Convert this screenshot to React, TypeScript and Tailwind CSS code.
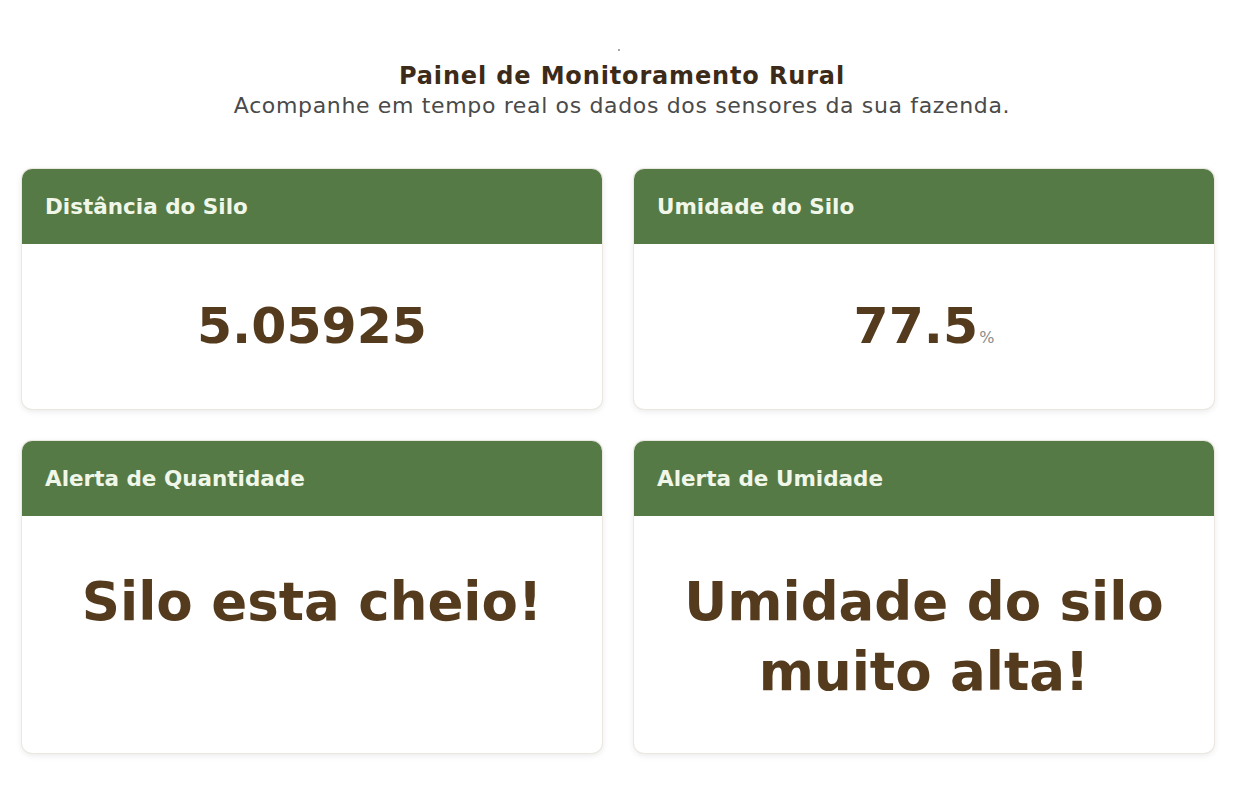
import React from "react";

const font = { fontFamily: '"DejaVu Sans", "Noto Sans", Arial, sans-serif' };

function Card({ title, children, bodyClass }: { title: string; children: React.ReactNode; bodyClass: string }) {
  return (
    <div className="flex flex-col overflow-hidden rounded-[10px] bg-white shadow-[0_0_0_1px_#ebe7e1,0_2px_7px_rgba(0,0,0,0.10)]">
      <div className="flex h-[75px] items-center bg-[#567a45] px-[23px]">
        <h2 className="text-[21.5px] font-bold leading-none text-[#f0f7e9]">{title}</h2>
      </div>
      <div className={bodyClass}>{children}</div>
    </div>
  );
}

export default function App() {
  return (
    <div className="min-h-[790px] w-full bg-white" style={font}>
      <div className="flex flex-col items-center pt-[49px]">
        <div className="ml-[-6px] h-[2px] w-[2px] rounded-full bg-[#8a8a8a]" />
        <h1 className="mt-[10px] text-[24px] font-bold leading-[30px] tracking-[0.85px] text-[#3d2b1a]">Painel de Monitoramento Rural</h1>
        <p className="text-[22px] leading-[29px] tracking-[0.65px] text-[#4a4a4a]">Acompanhe em tempo real os dados dos sensores da sua fazenda.</p>
      </div>
      <div className="grid grid-cols-2 gap-x-[32px] gap-y-[32px] pl-[22px] pr-[30px] pt-[49px]">
        <Card title="Distância do Silo" bodyClass="flex h-[165px] items-center justify-center">
          <span className="text-[50.5px] font-bold leading-none text-[#553b1d]">5.05925</span>
        </Card>
        <Card title="Umidade do Silo" bodyClass="flex h-[165px] items-center justify-center">
          <span className="text-[50.5px] font-bold leading-none text-[#553b1d]">
            77.5<span className="ml-[1px] text-[16px] font-normal text-[#8c8c8c]">%</span>
          </span>
        </Card>
        <Card title="Alerta de Quantidade" bodyClass="flex h-[237px] justify-center px-[20px] pt-[51px] text-center">
          <p className="text-[53px] font-bold leading-[70px] text-[#553b1d]">Silo esta cheio!</p>
        </Card>
        <Card title="Alerta de Umidade" bodyClass="flex h-[237px] justify-center px-[20px] pt-[51px] text-center">
          <p className="text-[53px] font-bold leading-[70px] text-[#553b1d]">Umidade do silo muito alta!</p>
        </Card>
      </div>
    </div>
  );
}
